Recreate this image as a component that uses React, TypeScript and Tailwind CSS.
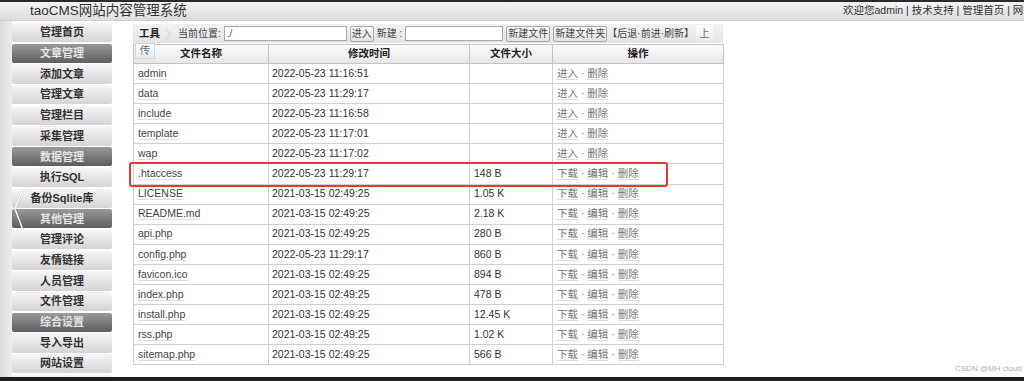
import React from "react";

const menu = [
  { label: "管理首页" },
  { label: "文章管理", group: true },
  { label: "添加文章" },
  { label: "管理文章" },
  { label: "管理栏目" },
  { label: "采集管理" },
  { label: "数据管理", group: true },
  { label: "执行SQL" },
  { label: "备份Sqlite库" },
  { label: "其他管理", group: true },
  { label: "管理评论" },
  { label: "友情链接" },
  { label: "人员管理" },
  { label: "文件管理" },
  { label: "综合设置", group: true },
  { label: "导入导出" },
  { label: "网站设置" },
  { label: "模板管理" },
];

const files = [
  { name: "admin", time: "2022-05-23 11:16:51", size: "", dir: true },
  { name: "data", time: "2022-05-23 11:29:17", size: "", dir: true },
  { name: "include", time: "2022-05-23 11:16:58", size: "", dir: true },
  { name: "template", time: "2022-05-23 11:17:01", size: "", dir: true },
  { name: "wap", time: "2022-05-23 11:17:02", size: "", dir: true },
  { name: ".htaccess", time: "2022-05-23 11:29:17", size: "148 B" },
  { name: "LICENSE", time: "2021-03-15 02:49:25", size: "1.05 K" },
  { name: "README.md", time: "2021-03-15 02:49:25", size: "2.18 K" },
  { name: "api.php", time: "2021-03-15 02:49:25", size: "280 B" },
  { name: "config.php", time: "2022-05-23 11:29:17", size: "860 B" },
  { name: "favicon.ico", time: "2021-03-15 02:49:25", size: "894 B" },
  { name: "index.php", time: "2021-03-15 02:49:25", size: "478 B" },
  { name: "install.php", time: "2021-03-15 02:49:25", size: "12.45 K" },
  { name: "rss.php", time: "2021-03-15 02:49:25", size: "1.02 K" },
  { name: "sitemap.php", time: "2021-03-15 02:49:25", size: "566 B" },
];

const font = "font-['Liberation_Sans','Noto_Sans_CJK_SC',sans-serif]";

const Link = ({ children }: { children: React.ReactNode }) => (
  <span className="border-b border-[#ddd] leading-[12px]">{children}</span>
);

const Btn = ({ children }: { children: React.ReactNode }) => (
  <span className="ml-[3px] h-[16px] px-[1px] flex items-center border border-[#a8a8a8] rounded-[2px] bg-gradient-to-b from-[#fafafa] to-[#e2e2e2] text-[#444]">
    {children}
  </span>
);

export default function App() {
  return (
    <div className={`relative w-[1024px] h-[381px] overflow-hidden bg-white text-[#333] ${font}`}>
      <div className="h-[2px] bg-[#2a2a2a]" />
      {/* header */}
      <div className="h-[19px] flex items-center justify-between bg-gradient-to-b from-[#f4f4f4] to-[#dcdcdc] border-b border-[#d0d0d0]">
        <span className="pl-[30px] text-[13.5px] text-[#333] leading-none">taoCMS网站内容管理系统</span>
        <span className="whitespace-nowrap text-[10.5px] text-[#333] w-[181px] overflow-hidden">
          欢迎您admin | 技术支持 | 管理首页 | 网站首页 | 退出
        </span>
      </div>

      <div className="flex h-[356px] overflow-hidden">
        <div className="w-[12px] bg-gradient-to-r from-[#dcdcdc] to-[#ececec]" />
        {/* sidebar */}
        <div className="w-[100px] flex flex-col pt-[2px]">
          {menu.map((m) => (
            <div
              key={m.label}
              className={`h-[19.3px] mb-[1.4px] shrink-0 flex items-center justify-center rounded-[2px] text-[11px] font-bold ${
                m.group
                  ? "bg-gradient-to-b from-[#9a9a9a] to-[#5e5e5e] text-[#e6e6e6]"
                  : "bg-gradient-to-b from-[#f6f6f6] to-[#d4d4d4] text-[#333]"
              }`}
            >
              {m.label}
            </div>
          ))}
        </div>

        {/* main */}
        <div className="ml-[21px] w-[590px] pt-[3px] relative">
          <div className="h-[19px] flex items-center bg-gradient-to-b from-[#f2f2f2] to-[#e4e4e4] text-[10px] whitespace-nowrap">
            <span className="ml-[6px] font-bold text-[10.5px] text-[#222]">工具</span>
            <svg className="ml-[5px]" width="6" height="14" viewBox="0 0 6 14">
              <polyline points="1,1 5,7 1,13" fill="none" stroke="#cfcfcf" strokeWidth="1" />
            </svg>
            <span className="ml-[7px] text-[#444]">当前位置:</span>
            <span className="ml-[3px] w-[123px] h-[15px] border border-[#a8a8a8] bg-white flex items-center pl-[2px] text-[#555]">./</span>
            <Btn>进入</Btn>
            <span className="ml-[3px] text-[#444]">新建 :</span>
            <span className="ml-[3px] w-[98px] h-[15px] border border-[#a8a8a8] bg-white" />
            <Btn>新建文件</Btn>
            <Btn>新建文件夹</Btn>
            <span className="text-[#444]">【后退·前进·刷新】</span>
            <span className="ml-[2px] h-[17px] w-[17px] flex items-center justify-center bg-gradient-to-b from-[#ffffff] to-[#e6e6e6] text-[#56709a]">
              上
            </span>
          </div>

          <table className="table-fixed border-collapse w-[590px] text-[10.5px] mt-[1px]">
            <colgroup>
              <col className="w-[135px]" />
              <col className="w-[201px]" />
              <col className="w-[83px]" />
              <col className="w-[171px]" />
            </colgroup>
            <thead>
              <tr className="h-[19px] bg-gradient-to-b from-[#fbfbfb] to-[#e6e6e6]">
                {["文件名称", "修改时间", "文件大小", "操作"].map((h) => (
                  <th key={h} className="border border-[#c4c4c4] font-bold text-[#222] p-0">
                    {h}
                  </th>
                ))}
              </tr>
            </thead>
            <tbody>
              {files.map((f) => (
                <tr key={f.name} className="h-[20.1px]">
                  <td className="border border-[#d0d0d0] pl-[4px] p-0 text-[#444]">
                    <Link>{f.name}</Link>
                  </td>
                  <td className="border border-[#d0d0d0] pl-[3px] p-0 text-[#333]">{f.time}</td>
                  <td className="border border-[#d0d0d0] pl-[4px] p-0 text-[#333]">{f.size}</td>
                  <td className="border border-[#d0d0d0] pl-[4px] p-0 text-[#777] whitespace-nowrap">
                    {f.dir ? (
                      <>
                        <Link>进入</Link> · <Link>删除</Link>
                      </>
                    ) : (
                      <>
                        <Link>下载</Link> · <Link>编辑</Link> · <Link>删除</Link>
                      </>
                    )}
                  </td>
                </tr>
              ))}
            </tbody>
          </table>

          {/* wrapped upload button */}
          <span className="absolute left-[2px] top-[22px] h-[16px] w-[20px] flex items-center justify-center border border-[#d4d4d4] bg-gradient-to-b from-[#ffffff] to-[#e8e8e8] text-[10.5px] text-[#56709a]">
            传
          </span>
        </div>
      </div>

      <div className="h-[4px] bg-[#1e1e1e]" />

      {/* highlight box */}
      <div className="absolute left-[129px] top-[162px] w-[539px] h-[25px] border-2 border-[#e53935] rounded-[3px]" />

      {/* slider arrow */}
      <svg className="absolute left-[13px] top-[186px]" width="12" height="46" viewBox="0 0 12 46">
        <polyline points="10,2 2,23 10,44" fill="none" stroke="#999" strokeWidth="2.2" opacity="0.35" />
        <polyline points="10,2 2,23 10,44" fill="none" stroke="#fff" strokeWidth="1.3" />
      </svg>

      <span className="absolute left-[955px] top-[363px] text-[8px] text-[#b0b0b0] font-['Liberation_Sans',sans-serif]">
        CSDN @MH cloud
      </span>
    </div>
  );
}
